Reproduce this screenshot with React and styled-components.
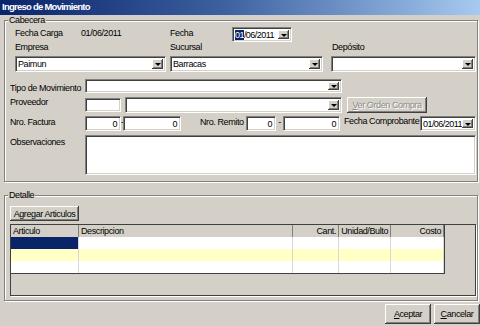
import React from 'react';
import styled, { createGlobalStyle } from 'styled-components';

const GlobalStyle = createGlobalStyle`
    html, body {
        margin: 0;
        padding: 0;
        background: #d4d0c8;
    }
    * {
        box-sizing: border-box;
    }
`

const Window = styled.div`
    width: 480px;
    height: 326px;
    overflow: hidden;
    background: #d4d0c8;
    display: flex;
    flex-direction: column;
    font-family: "Liberation Sans", Arial, sans-serif;
    font-size: 9px;
    letter-spacing: -0.4px;
    color: #000;
`

const TitleBar = styled.div`
    height: 15px;
    flex-shrink: 0;
    background: linear-gradient(to right, #0a246a 0%, #3a5e9e 45%, #a6caf0 100%);
    color: #fff;
    font-weight: bold;
    font-size: 9.5px;
    letter-spacing: -0.75px;
    line-height: 14px;
    padding-left: 2px;
`

const Body = styled.div`
    padding: 5px 2px 0 4px;
    display: flex;
    flex-direction: column;
`

const Group = styled.div`
    position: relative;
    border: 1px solid #808080;
    box-shadow: inset 1px 1px 0 #fff, 1px 1px 0 #fff;
    padding: ${p => p.$pt}px 1px ${p => p.$pb}px 5px;
    margin-top: ${p => p.$mt || 0}px;
    display: flex;
    flex-direction: column;
`

const Legend = styled.span`
    position: absolute;
    top: -6px;
    left: 3px;
    padding: 0 1px;
    line-height: 11px;
    background: #d4d0c8;
`

const Row = styled.div`
    display: flex;
    align-items: flex-start;
    height: ${p => p.$h}px;
    margin-top: ${p => p.$mt || 0}px;
    padding-left: ${p => p.$pl || 0}px;
`

const Label = styled.span`
    flex-shrink: 0;
    width: ${p => p.$w ? p.$w + 'px' : 'auto'};
    margin-top: ${p => p.$mt || 0}px;
    padding-left: ${p => p.$pl || 0}px;
    line-height: 11px;
    white-space: nowrap;
`

const Sunken = styled.div`
    position: relative;
    flex-shrink: 0;
    width: ${p => p.$w}px;
    height: ${p => p.$h ? p.$h + 'px' : '100%'};
    margin-top: ${p => p.$mt || 0}px;
    margin-left: ${p => p.$ml || 0}px;
    background: #fff;
    border: 1px solid;
    border-color: #808080 #fff #fff #808080;
    box-shadow: inset 1px 1px 0 #404040, inset -1px -1px 0 #d4d0c8;
    display: flex;
    align-items: center;
    justify-content: ${p => p.$right ? 'flex-end' : 'flex-start'};
    padding: ${p => p.$right ? '0 3px 0 0' : '0 0 0 2px'};
    white-space: nowrap;
    overflow: hidden;
`

const DropBtn = styled.span`
    position: absolute;
    top: 2px;
    right: 2px;
    bottom: 2px;
    width: 11px;
    background: #d4d0c8;
    box-shadow: inset -1px -1px 0 #404040, inset 1px 1px 0 #fff, inset -2px -2px 0 #808080;
    &::after {
        content: '';
        position: absolute;
        left: 3px;
        top: 50%;
        margin-top: -1px;
        border-left: 3px solid transparent;
        border-right: 3px solid transparent;
        border-top: 3px solid #000;
    }
`

const DateText = styled.span`
    letter-spacing: -0.55px;
`

const Selected = styled.span`
    background: #0a246a;
    color: #fff;
`

const Dash = styled.span`
    flex-shrink: 0;
    width: ${p => p.$w}px;
    text-align: center;
    line-height: 11px;
    margin-top: 1px;
`

const Button = styled.button`
    flex-shrink: 0;
    width: ${p => p.$w}px;
    height: ${p => p.$h}px;
    margin-left: ${p => p.$ml || 0}px;
    padding: 0;
    border: none;
    background: #d4d0c8;
    box-shadow: inset -1px -1px 0 #404040, inset 1px 1px 0 #fff, inset -2px -2px 0 #808080;
    font-family: inherit;
    font-size: 9px;
    letter-spacing: -0.4px;
    color: ${p => p.disabled ? '#8c8c8c' : '#000'};
    text-shadow: ${p => p.disabled ? '1px 1px 0 #fff' : 'none'};
`

const Sheet = styled.div`
    margin-top: 3px;
    height: 72px;
    border: 1px solid #404040;
    box-shadow: 1px 1px 0 #fff;
    background: #d4d0c8;
    display: flex;
    align-items: flex-start;
`

const Cols = styled.div`
    display: grid;
    grid-template-columns: 68px 214px 46px 52px 53px;
    grid-auto-rows: 12px;
    border-right: 1px solid #404040;
    border-bottom: 1px solid #404040;
`

const Head = styled.div`
    height: 13px;
    line-height: 12px;
    padding: 0 2px;
    border-right: 1px solid #808080;
    border-bottom: 1px solid #808080;
    text-align: ${p => p.$right ? 'right' : 'left'};
    white-space: nowrap;
`

const Cell = styled.div`
    background: ${p => p.$bg};
    border-right: 1px solid #d8d8d8;
`

const Footer = styled.div`
    display: flex;
    justify-content: flex-end;
    gap: 3px;
    margin-top: 3px;
`

function Combo({ w, ml, value }) {
    return (
        <Sunken $w={w} $ml={ml}>
            {value}
            <DropBtn />
        </Sunken>
    )
}

const columns = [
    { title: 'Articulo' },
    { title: 'Descripcion' },
    { title: 'Cant.', right: true },
    { title: 'Unidad/Bulto', right: true },
    { title: 'Costo', right: true },
]

const rows = ['#fff', '#ffffc6', '#fff']

function App() {
    return (
        <Window>
            <GlobalStyle />
            <TitleBar>Ingreso de Movimiento</TitleBar>
            <Body>
                <Group $pt={6} $pb={6}>
                    <Legend>Cabecera</Legend>
                    <Row $h={15} $pl={5}>
                        <Label $w={66} $mt={1}>Fecha Carga</Label>
                        <Label $w={89} $mt={1}>01/06/2011</Label>
                        <Label $w={62} $mt={1}>Fecha</Label>
                        <Sunken $w={60}>
                            <DateText><Selected>01</Selected>/06/2011</DateText>
                            <DropBtn />
                        </Sunken>
                    </Row>
                    <Row $h={12} $pl={5}>
                        <Label $w={155}>Empresa</Label>
                        <Label $w={162}>Sucursal</Label>
                        <Label>Depósito</Label>
                    </Row>
                    <Row $h={16} $mt={2} $pl={5}>
                        <Combo w={151} value="Paimun" />
                        <Combo w={153} ml={4} value="Barracas" />
                        <Combo w={145} ml={8} />
                    </Row>
                    <Row $h={14} $mt={7}>
                        <Label $w={75} $mt={4}>Tipo de Movimiento</Label>
                        <Combo w={257} />
                    </Row>
                    <Row $h={16} $mt={4}>
                        <Label $w={75}>Proveedor</Label>
                        <Sunken $w={36} $h={14} $mt={1} />
                        <Combo w={217} ml={4} />
                        <Button $w={80} $h={16} $ml={5} disabled><u>V</u>er Orden Compra</Button>
                    </Row>
                    <Row $h={15} $mt={3}>
                        <Label $w={75} $mt={1}>Nro. Factura</Label>
                        <Sunken $w={36} $right>0</Sunken>
                        <Dash $w={2}>-</Dash>
                        <Sunken $w={58} $right>0</Sunken>
                        <Label $w={65} $mt={1} $pl={19}>Nro. Remito</Label>
                        <Sunken $w={30} $right>0</Sunken>
                        <Dash $w={7}>-</Dash>
                        <Sunken $w={57} $right>0</Sunken>
                        <Label $w={80} $pl={4}>Fecha Comprobante</Label>
                        <Sunken $w={56}>
                            <DateText>01/06/2011</DateText>
                            <DropBtn />
                        </Sunken>
                    </Row>
                    <Row $h={40} $mt={4}>
                        <Label $w={75} $mt={2}>Observaciones</Label>
                        <Sunken $w={391} />
                    </Row>
                </Group>
                <Group $pt={10} $pb={4} $mt={13}>
                    <Legend>Detalle</Legend>
                    <Row $h={15}>
                        <Button $w={69} $h={15}>Agregar Articulos</Button>
                    </Row>
                    <Sheet>
                        <Cols>
                            {columns.map(c => (
                                <Head key={c.title} $right={c.right}>{c.title}</Head>
                            ))}
                            {rows.map((bg, r) =>
                                columns.map((c, i) => (
                                    <Cell key={r + '-' + i} $bg={r === 0 && i === 0 ? '#0a246a' : bg} />
                                ))
                            )}
                        </Cols>
                    </Sheet>
                </Group>
            </Body>
            <Footer>
                <Button $w={46} $h={20}><u>A</u>ceptar</Button>
                <Button $w={46} $h={20}><u>C</u>ancelar</Button>
            </Footer>
        </Window>
    )
}

export default App;
